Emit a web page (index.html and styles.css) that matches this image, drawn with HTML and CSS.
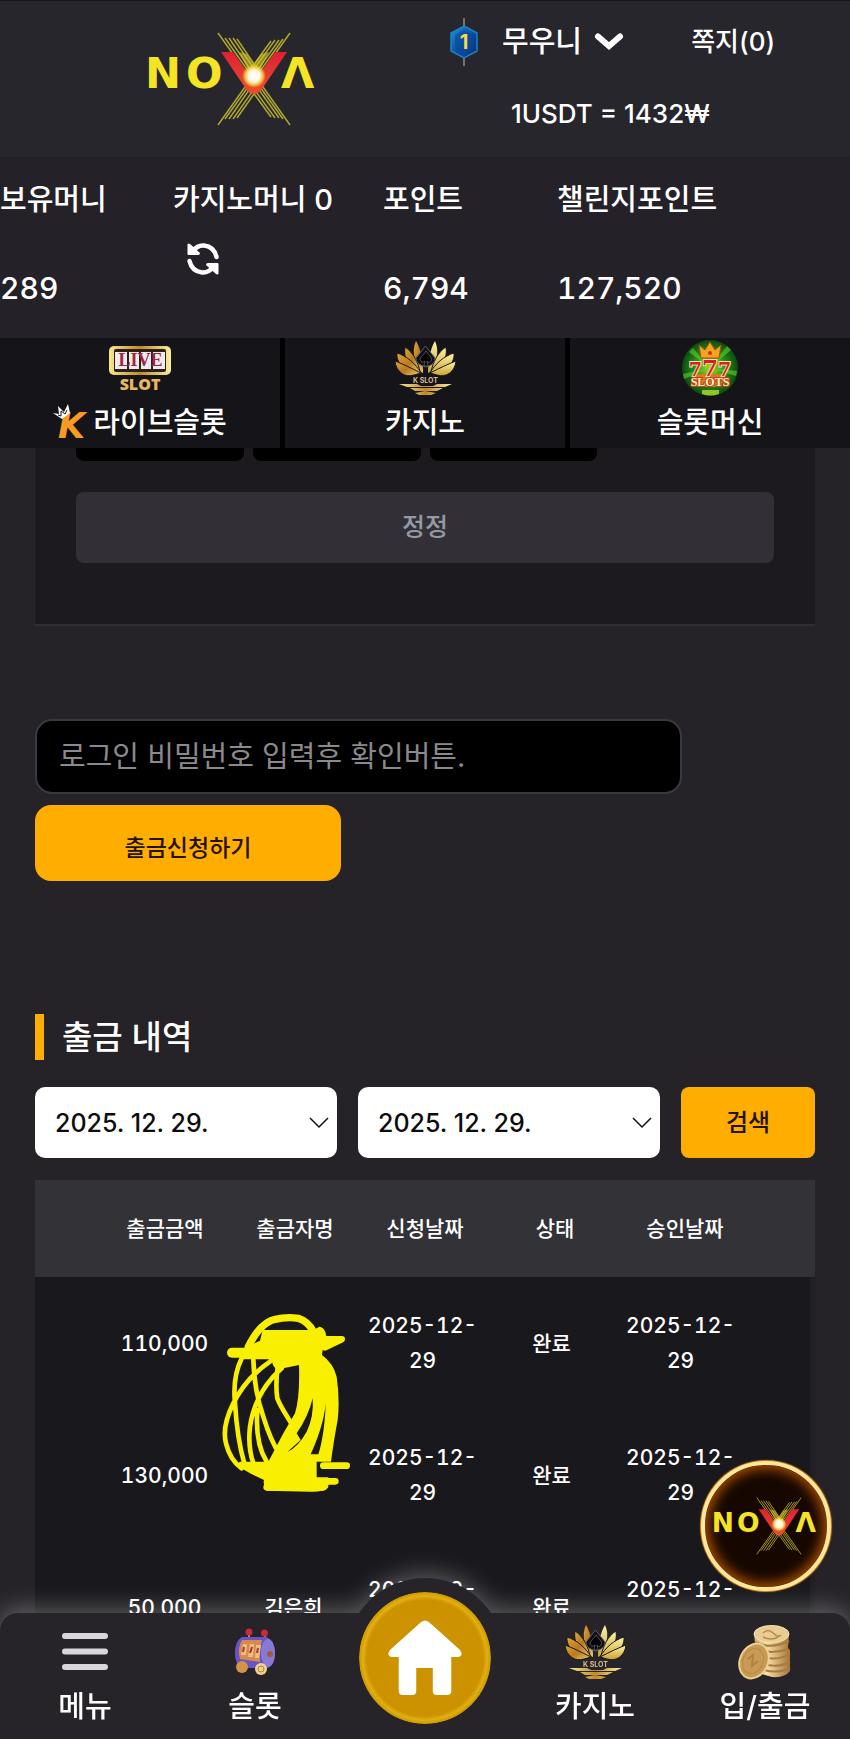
FILE: index.html
```html
<!DOCTYPE html>
<html lang="ko">
<head>
<meta charset="utf-8">
<meta name="viewport" content="width=device-width, initial-scale=1">
<title>NOVA</title>
<link rel="stylesheet" href="styles.css">
</head>
<body>
<svg class="defs" aria-hidden="true">
  <defs>
    <linearGradient id="gold" x1="0" y1="0" x2="1" y2="1"><stop offset="0" stop-color="#e0a63a"/><stop offset=".5" stop-color="#b87a20"/><stop offset="1" stop-color="#f0cf6a"/></linearGradient>
    <linearGradient id="goldLight" x1="0" y1="0" x2="0" y2="1"><stop offset="0" stop-color="#fbf6a8"/><stop offset="1" stop-color="#c9a032"/></linearGradient>
    <linearGradient id="goldBar" x1="0" y1="0" x2="1" y2="0"><stop offset="0" stop-color="#f6e98c"/><stop offset=".5" stop-color="#c08a2c"/><stop offset="1" stop-color="#fbf0a0"/></linearGradient>
    <linearGradient id="red" x1="0" y1="0" x2="0" y2="1"><stop offset="0" stop-color="#e01f33"/><stop offset="1" stop-color="#e8502c"/></linearGradient>
    <radialGradient id="spark"><stop offset="0" stop-color="#fff"/><stop offset=".5" stop-color="#fff6dc"/><stop offset=".75" stop-color="#ffd84a" stop-opacity=".8"/><stop offset="1" stop-color="#ffc400" stop-opacity="0"/></radialGradient>
    <radialGradient id="green"><stop offset="0" stop-color="#b4d820"/><stop offset=".5" stop-color="#2a9a1c"/><stop offset="1" stop-color="#0b4a10"/></radialGradient>
    <linearGradient id="blue" x1="0" y1="0" x2="1" y2="1"><stop offset="0" stop-color="#2593dc"/><stop offset=".5" stop-color="#0b4fa4"/><stop offset="1" stop-color="#072a78"/></linearGradient>
    <linearGradient id="coin" x1="0" y1="0" x2="1" y2="0"><stop offset="0" stop-color="#d9ae66"/><stop offset=".35" stop-color="#f6dfa6"/><stop offset="1" stop-color="#a87434"/></linearGradient>
    <symbol id="nova" viewBox="0 0 170 94">
      <g stroke="#cfc62e" stroke-width="1.5" opacity=".8">
        <path d="M70 1 102 46M77 6 105 46M81 6 108 46M85 6 111 44M89 7 113 42"/>
        <path d="M142 1 110 46M135 7 107 46M131 8 104 46M127 8 101 44M123 9 99 42"/>
        <path d="M70 93 102 48M77 87 105 48M81 87 108 48M85 87 111 50M89 86 113 52"/>
        <path d="M142 93 110 48M135 87 107 48M131 86 104 48M127 86 101 50M123 85 99 52"/>
      </g>
      <text class="nova-text" x="-3" y="56">N</text>
      <text class="nova-text" x="38" y="56">O</text>
      <text class="nova-text" x="133" y="56">Λ</text>
      <path d="M73 20H85L106 50 127 20H139L114 57Q111 62 106 62 101 62 98 57Z" fill="url(#red)"/>
      <path d="M91 20 99 22 106 32 113 22 121 20 112 38H100Z" fill="#d9c82b" opacity=".6"/>
      <circle cx="106" cy="44" r="12" fill="url(#spark)"/>
    </symbol>
    <symbol id="lotus" viewBox="0 0 61 55">
      <path d="M26 32C20 22 16 12 21 1 26 9 28 22 28 33Z" fill="url(#gold)"/>
      <path d="M24 32C14 27 8 18 10 7 18 12 23 22 25 32Z" fill="url(#gold)" stroke="#19171b"/>
      <path d="M24 34C12 32 1 25 2 13 12 16 21 24 26 33Z" fill="url(#gold)" stroke="#19171b"/>
      <path d="M26 33C16 28 8 24 0 21 1 32 10 38 19 35Z" fill="url(#gold)" stroke="#19171b"/>
      <path d="M35 32C41 22 45 12 40 1 35 9 33 22 33 33Z" fill="url(#goldLight)"/>
      <path d="M37 32C47 27 53 18 51 7 43 12 38 22 36 32Z" fill="url(#goldLight)" stroke="#19171b"/>
      <path d="M37 34C49 32 60 25 59 13 49 16 40 24 35 33Z" fill="url(#goldLight)" stroke="#19171b"/>
      <path d="M35 33C45 28 53 24 61 21 60 32 51 38 42 35Z" fill="url(#goldLight)" stroke="#19171b"/>
      <path d="M30.500 6 40 18Q41 24 31 27 20 24 21 18Z" fill="#111015" stroke="#5b5a68"/>
      <path d="M31 11C33 15 38 17 36 21 35 23 32 23 32 21L33 26H29L30 21C28 23 25 22 25 19 26 16 29 15 31 11Z" fill="#050507" stroke="#77777f" stroke-width=".6"/>
      <text class="lotus-text" x="30.500" y="43">K SLOT</text>
      <path d="M4 44H22L26 46H38L42 44H57L50 47H12ZM15 48H48L42 51H20ZM20 53 30 51 41 53 36 55H24Z" fill="url(#goldBar)"/>
    </symbol>
  </defs>
</svg>

<div class="app">
  <header class="top">
    <div class="brand-bar">
      <a class="brand" href="#" aria-label="NOVA"><svg width="170" height="94" aria-hidden="true"><use href="#nova"/></svg></a>
      <div class="account">
        <div class="account-row">
          <svg width="28" height="48" viewBox="0 0 28 48" aria-hidden="true"><path d="M14 0V48" stroke="#77736c" stroke-width="2"/><path d="M14 8 27 15V33L14 40 1 33V15Z" fill="url(#blue)" stroke="#1687bd" stroke-width="1.500"/><path d="M14 12 23 17V31L14 36 5 31V17Z" fill="#084795" opacity=".6"/><text class="level-text" x="14" y="31">1</text></svg>
          <button class="user" type="button">무우니 <svg width="28" height="18" viewBox="0 0 28 18" aria-hidden="true"><path d="M3 3.500 14 13 25 3.500" fill="none" stroke="#fff" stroke-width="6" stroke-linecap="round"/></svg></button>
          <a class="notes" href="#">쪽지(0)</a>
        </div>
        <p class="rate">1USDT = 1432₩</p>
      </div>
    </div>
    <dl class="stats">
      <div class="stat"><dt>보유머니</dt><dd>289</dd></div>
      <div class="stat"><dt>카지노머니 0</dt><dd class="refresh-cell"><button class="refresh" type="button" aria-label="새로고침"><svg width="32" height="32" viewBox="0 0 32 32" aria-hidden="true"><g fill="none" stroke="#fff" stroke-width="4.500" stroke-linecap="round"><path d="M5 9Q10 2 17 2.500 27 3.500 29.500 14"/><path d="M27 23Q22 30 15 29.500 5 28.500 2.500 18"/></g><path d="M.5 1.500Q1 0 3 1L13 10Q13 12 11 12H1.500Q.5 12 .5 11ZM31.500 30.500Q31 32 29 31L19 22Q19 20 21 20H30.500Q31.500 20 31.500 21Z" fill="#fff"/></svg></button></dd></div>
      <div class="stat"><dt>포인트</dt><dd>6,794</dd></div>
      <div class="stat"><dt>챌린지포인트</dt><dd>127,520</dd></div>
    </dl>
    <nav class="tabs" aria-label="게임">
      <a class="tab" href="#">
        <svg width="62" height="58" viewBox="0 0 62 58" aria-hidden="true"><rect y="8" width="62" height="29" rx="5" fill="url(#goldBar)"/><rect x="5" y="11" width="52" height="23" rx="2" fill="#2d2018"/><path d="M6 14H18V31H6ZM20 14H30V31H20ZM32 14H42V31H32ZM44 14H56V31H44Z" fill="#eeeaf0"/><text class="live-text" x="31.500" y="28">LIVE</text><text class="slot-text" x="31" y="52">SLOT</text></svg>
        <span class="tab-label"><svg width="36" height="36" viewBox="0 0 36 36" aria-hidden="true"><text class="k-text" x="5" y="33">K</text><path d="M0 8 6 9 5 1 11 7 15 -1 17 8 13 11 9 14Z" fill="#fff"/><path d="M5 10 8 11 8 6 12 9 14 5" fill="none" stroke="#17161a" stroke-width="1"/></svg>라이브슬롯</span>
      </a>
      <a class="tab" href="#">
        <svg width="61" height="58" viewBox="0 0 61 58" aria-hidden="true"><use href="#lotus" y="2" width="61" height="55"/></svg>
        <span class="tab-label">카지노</span>
      </a>
      <a class="tab" href="#">
        <svg width="58" height="58" viewBox="0 0 58 58" aria-hidden="true"><circle cx="29" cy="30" r="28" fill="url(#green)"/><path d="M29 30 8 14 12 10ZM29 30 46 8 50 12ZM29 30 2 36 3 41ZM29 30 55 38 56 33Z" fill="#5ed02c" opacity=".6"/><path d="M20 20 18 7 24 12 29 4 34 12 40 7 38 20Z" fill="#f2a51d" stroke="#b84a0c"/><circle cx="29" cy="15" r="2" fill="#c3301c"/><path d="M14 36H45L40 49H18Z" fill="#d9781c"/><text class="seven-text" x="29" y="38">7<tspan class="seven-big">7</tspan>7</text><text class="slots-text" x="29" y="48">SLOTS</text><path d="M21 52H38V56Q29 59 21 56Z" fill="#8fc72a"/></svg>
        <span class="tab-label">슬롯머신</span>
      </a>
    </nav>
  </header>

  <main class="content">
    <section class="card">
      <div class="keys"><button class="key" type="button" aria-label="금액 1"></button><button class="key" type="button" aria-label="금액 2"></button><button class="key" type="button" aria-label="금액 3"></button></div>
      <button class="reset" type="button">정정</button>
    </section>
    <form class="confirm">
      <input class="password" type="password" aria-label="로그인 비밀번호" placeholder="로그인 비밀번호 입력후 확인버튼.">
      <button class="submit" type="button">출금신청하기</button>
    </form>
    <section class="history">
      <h2 class="history-title">출금 내역</h2>
      <form class="filter">
        <div class="date"><select class="date-select" aria-label="시작일"><option>2025. 12. 29.</option></select><svg class="date-arrow" width="20" height="12" viewBox="0 0 20 12" aria-hidden="true"><path d="M1 1 10 10 19 1" fill="none" stroke="#111" stroke-width="1.500"/></svg></div>
        <div class="date"><select class="date-select" aria-label="종료일"><option>2025. 12. 29.</option></select><svg class="date-arrow" width="20" height="12" viewBox="0 0 20 12" aria-hidden="true"><path d="M1 1 10 10 19 1" fill="none" stroke="#111" stroke-width="1.500"/></svg></div>
        <button class="search" type="button">검색</button>
      </form>
      <div class="table-wrap">
        <table class="table">
          <thead><tr><th>출금금액</th><th>출금자명</th><th>신청날짜</th><th>상태</th><th>승인날짜</th></tr></thead>
          <tbody>
            <tr><td>110,000</td><td></td><td>2025-12-<wbr>29</td><td>완료</td><td>2025-12-<wbr>29</td></tr>
            <tr><td>130,000</td><td></td><td>2025-12-<wbr>29</td><td>완료</td><td>2025-12-<wbr>29</td></tr>
            <tr><td>50,000</td><td>김은희</td><td>2025-12-<wbr>29</td><td>완료</td><td>2025-12-<wbr>29</td></tr>
          </tbody>
        </table>
        <svg class="scribble" width="170" height="210" viewBox="0 0 510 630" aria-hidden="true">
          <g fill="none" stroke="#f9ef00" stroke-linecap="round" stroke-linejoin="round">
            <path stroke-width="22" d="M145 140C165 100 190 65 225 58Q260 50 295 55 325 65 340 95"/>
            <path stroke-width="14" d="M125 175C105 215 100 260 105 310Q112 420 133 490M160 178C162 240 172 300 190 350 205 400 220 435 240 465M210 185C165 215 125 260 100 310 75 360 70 400 78 430Q90 480 125 505M245 205C195 250 160 310 150 380Q143 440 160 490M172 330Q165 430 200 485M233 200C228 240 228 270 232 295 245 330 265 350 300 415"/>
            <path stroke-width="30" d="M96 158H130"/>
            <path stroke-width="20" d="M375 118H425L375 142M370 497H440M360 544H406M200 562H370"/>
          </g>
          <path fill="#f9ef00" d="M130 145 180 122 188 90H340L358 80Q375 82 378 105L382 132 368 150 366 165Q400 190 410 230 420 300 413 360 400 430 393 485L350 485V510 532H385V560Q380 575 330 575L200 572Q188 550 192 540L150 520 108 495 120 485H205L250 400 285 340Q300 290 297 195L235 208Q220 205 216 185L205 178H120Z"/>
          <path fill="#1b1a1b" d="M338 295Q325 350 290 400L302 420 262 456Q295 440 320 395 342 350 338 295ZM378 290Q378 360 332 463H355Q375 400 378 290Z"/>
        </svg>
      </div>
    </section>
  </main>

  <nav class="dock" aria-label="하단 메뉴">
    <a class="dock-item" href="#"><svg width="46" height="56" viewBox="0 0 46 56" aria-hidden="true"><path d="M3 12H43M3 27.500H43M3 43H43" stroke="#d9d5dc" stroke-width="6" stroke-linecap="round"/></svg>메뉴</a>
    <a class="dock-item" href="#"><svg width="42" height="56" viewBox="0 0 42 56" aria-hidden="true"><path d="M15 9V15M31 10V16" stroke="#bb877d" stroke-width="2"/><circle cx="15" cy="8" r="3.500" fill="#c52c35"/><circle cx="30.500" cy="9" r="3.500" fill="#c52c35"/><path d="M8 13H33Q41 18 41 30 41 40 34 44H7Q1 40 1 29 1 17 8 13Z" fill="#6854c4"/><ellipse cx="34" cy="29" rx="7" ry="14" fill="#8879d6"/><path d="M8 16H28Q25 26 26 38L6 35Q3 25 8 16Z" fill="#d58a51"/><path d="M9 20H13L12 31H7ZM16 20H20L19 33H14ZM22 21H27L25 34H21Z" fill="#f1bd80"/><path d="M10 23 9 28M18 23 16 29M24 24 23 29" stroke="#a43a24" stroke-width="2"/><circle cx="36" cy="30" r="3" fill="#a65a38"/><circle cx="8" cy="43" r="6" fill="#d39348"/><circle cx="27" cy="45" r="6" fill="#f0d291"/><circle cx="27" cy="45" r="3" fill="none" stroke="#ae803d"/></svg>슬롯</a>
    <a class="home" href="#" aria-label="홈"><svg width="74" height="76" viewBox="0 0 76 76" preserveAspectRatio="none" aria-hidden="true"><path d="M34 2Q38 -1 42 2L74 30Q78 36 72 37H65V71Q65 75 61 75H50Q46 75 46 71V48H29V71Q29 75 25 75H15Q11 75 11 71V37H4Q-2 36 2 30Z" fill="#fff"/></svg></a>
    <a class="dock-item" href="#"><svg width="61" height="56" viewBox="0 0 61 56" aria-hidden="true"><use href="#lotus" width="61" height="55"/></svg>카지노</a>
    <a class="dock-item" href="#"><svg width="54" height="56" viewBox="0 0 54 56" aria-hidden="true"><path d="M16 9H51L50 24 52 26V47Q47 54 34 53L20 49Z" fill="url(#coin)"/><path d="M17 18Q33 26 51 17M18 25Q34 31 50 25M20 32Q38 38 52 30M22 39Q38 45 52 38M26 46Q40 50 52 44" fill="none" stroke="#a87b42" stroke-width="2"/><ellipse cx="33.500" cy="10" rx="17.500" ry="8.500" fill="#e9cc91" stroke="#f5e3b5"/><path d="M25 9Q30 4 35 9T43 11M25 13Q33 17 40 13" fill="none" stroke="#b68b4d" stroke-width="1.500"/><ellipse cx="16" cy="37" rx="14" ry="18" transform="rotate(25 16 37)" fill="#c99a56" stroke="#edcf91" stroke-width="2"/><ellipse cx="15" cy="37" rx="10" ry="13" transform="rotate(25 15 37)" fill="none" stroke="#b98a48"/><path d="M10 35 15 31 14 42 20 37" fill="none" stroke="#b08042" stroke-width="2"/></svg>입/출금</a>
  </nav>
  <a class="bubble" href="#" aria-label="NOVA"><svg width="106" height="58" viewBox="0 0 170 94" aria-hidden="true"><use href="#nova"/></svg></a>
</div>
</body>
</html>
```

FILE: styles.css
```css
* { box-sizing: border-box; }
body {
  margin: 0;
  background: #252328;
  color: #fff;
  font-family: Inter, "Noto Sans CJK KR", sans-serif;
  font-size: 29px;
  font-weight: 500;
  line-height: 40px;
}
a { color: inherit; text-decoration: none; }
button, input, select { margin: 0; padding: 0; border: 0; font: inherit; color: inherit; }
button { background: none; }
svg { display: block; flex: none; overflow: visible; }
.defs { position: absolute; width: 0; height: 0; }

.app { height: 100vh; min-height: 900px; display: flex; flex-direction: column; position: relative; overflow: hidden; }

/* Header */
.top { flex: none; }
.brand-bar {
  display: grid;
  grid-template-columns: 450fr 400fr;
  height: 158px;
  border-top: 1px solid #17151a;
  border-bottom: 1px solid #211f24;
  background: #27262c;
}
.brand { justify-self: center; padding: 31px 0 0 16px; }
.account-row { display: flex; align-items: center; padding-top: 17px; padding-right: 75px; }
.user { display: flex; align-items: center; gap: 13px; margin-left: 24px; }
.notes { margin-left: auto; font-size: 26px; font-weight: 500; }
.rate { margin: 28px 0 0 61px; font-size: 26px; }

.stats {
  display: grid;
  grid-template-columns: 173fr 210fr 174fr 293fr;
  height: 180px;
  margin: 0;
  background: #242228;
}
.stat { padding-top: 22px; white-space: nowrap; }
.stat dd { margin: 48px 0 0; font-size: 30px; font-variant-numeric: tabular-nums; }
.stat dd.refresh-cell { margin: 23px 0 0 14px; }
.refresh { display: block; }

.tabs { display: grid; grid-template-columns: repeat(3, 1fr); gap: 5px; background: #000; }
.tab { display: flex; flex-direction: column; align-items: center; height: 110px; background: #151419; }
.tab-label { display: flex; align-items: center; gap: 4px; padding-top: 7px; }

.nova-text { font: bold 43px "DejaVu Sans", sans-serif; fill: #f5e426; }
.level-text { font: bold 20px Inter, sans-serif; fill: #f4d94b; text-anchor: middle; }
.lotus-text { font: bold 7px Inter, sans-serif; fill: #d9b98c; text-anchor: middle; }
.live-text { font: bold 18px "Liberation Serif", serif; fill: #a32638; text-anchor: middle; }
.slot-text { font: 800 16px "Open Sans", sans-serif; fill: #e9b662; text-anchor: middle; }
.k-text { font: italic bold 35px "DejaVu Sans", sans-serif; fill: #f99b22; }
.seven-text { font: bold 19px "DejaVu Serif", serif; fill: #d8201c; stroke: #f6dfb0; stroke-width: 2px; paint-order: stroke; text-anchor: middle; }
.seven-big { font-size: 23px; }
.slots-text { font: bold 12px "Liberation Serif", serif; fill: #fff0c0; stroke: #bb4518; stroke-width: 2px; paint-order: stroke; text-anchor: middle; }

/* Content */
.content { flex: 1; min-height: 0; overflow: hidden; padding: 0 35px; }
.card { padding: 0 41px 61px; border-bottom: 2px solid #302e34; background: #1c1a1f; }
.keys { display: grid; grid-template-columns: repeat(4, 1fr); gap: 9px; height: 13px; }
.key { border-radius: 0 0 8px 8px; background: #000; }
.reset { display: block; width: 100%; height: 71px; padding-bottom: 2px; margin-top: 31px; border-radius: 8px; background: #323036; color: #939aa5; font-size: 25px; }

.confirm { display: flex; flex-direction: column; gap: 11px; margin-top: 93px; }
.password { width: 83%; height: 75px; padding: 0 22px; border: 2px solid #3a393d; border-radius: 17px; background: #000; font-weight: 400; }
.password::placeholder { color: #8b898c; opacity: 1; }
.submit { width: 306px; height: 76px; padding-top: 9px; border-radius: 16px; background: #ffae00; color: #24120a; font-size: 23px; }

.history { margin-top: 133px; }
.history-title { margin: 0; padding-left: 18px; border-left: 9px solid #ffae00; font-size: 33px; line-height: 46px; font-weight: 500; }
.filter { display: grid; grid-template-columns: 302fr 302fr 134fr; gap: 21px; margin-top: 27px; }
.date { display: grid; align-items: center; }
.date-select { grid-area: 1 / 1; width: 100%; height: 71px; padding: 0 20px; border-radius: 10px; background: #fff; color: #0c0c0e; font-size: 25px; appearance: none; }
.date-arrow { grid-area: 1 / 1; justify-self: end; margin-right: 8px; pointer-events: none; }
.search { border-radius: 8px; background: #ffae00; color: #24120a; font-size: 24px; }

.table-wrap { position: relative; margin-top: 22px; background: #211f23; }
.table { display: block; font-size: 21px; line-height: 35px; text-align: center; font-variant-numeric: tabular-nums; }
.table thead, .table tbody { display: block; padding: 0 calc(100% / 12); }
.table thead { background: #323237; }
.table tbody { margin-right: 5px; background: #19181c; }
.table tr { display: grid; grid-template-columns: repeat(5, 1fr); align-items: center; height: 132px; }
.table thead tr { height: 97px; }
.table th, .table td { padding: 0; font-weight: 500; }
.table td { padding: 0 5px; }
.scribble { position: absolute; left: 165px; top: 120px; }

/* Bottom dock */
.dock {
  position: relative;
  flex: none;
  display: grid;
  grid-template-columns: repeat(5, 1fr);
  height: 126px;
  border-radius: 18px 18px 0 0;
  background: #262429;
  filter: drop-shadow(0 -4px 12px rgba(255, 255, 255, .3));
}
.dock-item { display: flex; flex-direction: column; align-items: center; gap: 7px; padding-top: 11px; }
.home {
  justify-self: center;
  display: grid;
  place-items: center;
  width: 160px;
  height: 160px;
  margin-top: -35px;
  border: 14px solid #262429;
  border-radius: 50%;
  background: radial-gradient(circle closest-side, #cc9200 88%, #e2b010 94%, #c99700 100%) padding-box, #262429;
}
.bubble {
  position: absolute;
  right: 19px;
  bottom: 148px;
  display: grid;
  place-items: center;
  width: 130px;
  height: 130px;
  border: 4px solid #ffe79a;
  border-radius: 50%;
  background: #160800;
  box-shadow: inset 0 0 12px 4px #a64c00, 0 0 1px 1px #d98a24;
}
```
